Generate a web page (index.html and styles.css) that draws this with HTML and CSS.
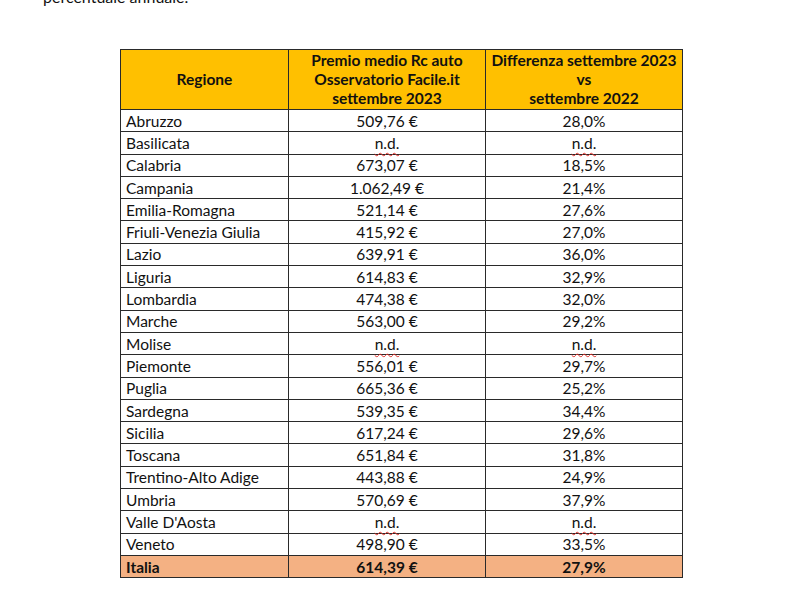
FILE: index.html
```html
<!DOCTYPE html>
<html lang="it">
<head>
<meta charset="utf-8">
<link rel="stylesheet" href="styles.css">
</head>
<body>
<p class="intro">percentuale annuale.</p>
<table class="rc">
  <colgroup>
    <col class="c1"><col class="c2"><col class="c3">
  </colgroup>
  <thead>
    <tr>
      <th>Regione</th>
      <th>Premio medio Rc auto<br>Osservatorio Facile.it<br>settembre 2023</th>
      <th>Differenza settembre 2023<br>vs<br>settembre 2022</th>
    </tr>
  </thead>
  <tbody>
    <tr><td>Abruzzo</td><td>509,76 €</td><td>28,0%</td></tr>
    <tr><td>Basilicata</td><td><span class="nd">n.d.</span></td><td><span class="nd">n.d.</span></td></tr>
    <tr><td>Calabria</td><td>673,07 €</td><td>18,5%</td></tr>
    <tr><td>Campania</td><td>1.062,49 €</td><td>21,4%</td></tr>
    <tr><td>Emilia-Romagna</td><td>521,14 €</td><td>27,6%</td></tr>
    <tr><td>Friuli-Venezia Giulia</td><td>415,92 €</td><td>27,0%</td></tr>
    <tr><td>Lazio</td><td>639,91 €</td><td>36,0%</td></tr>
    <tr><td>Liguria</td><td>614,83 €</td><td>32,9%</td></tr>
    <tr><td>Lombardia</td><td>474,38 €</td><td>32,0%</td></tr>
    <tr><td>Marche</td><td>563,00 €</td><td>29,2%</td></tr>
    <tr><td>Molise</td><td><span class="nd">n.d.</span></td><td><span class="nd">n.d.</span></td></tr>
    <tr><td>Piemonte</td><td>556,01 €</td><td>29,7%</td></tr>
    <tr><td>Puglia</td><td>665,36 €</td><td>25,2%</td></tr>
    <tr><td>Sardegna</td><td>539,35 €</td><td>34,4%</td></tr>
    <tr><td>Sicilia</td><td>617,24 €</td><td>29,6%</td></tr>
    <tr><td>Toscana</td><td>651,84 €</td><td>31,8%</td></tr>
    <tr><td>Trentino-Alto Adige</td><td>443,88 €</td><td>24,9%</td></tr>
    <tr><td>Umbria</td><td>570,69 €</td><td>37,9%</td></tr>
    <tr><td>Valle D'Aosta</td><td><span class="nd">n.d.</span></td><td><span class="nd">n.d.</span></td></tr>
    <tr><td>Veneto</td><td>498,90 €</td><td>33,5%</td></tr>
    <tr class="total"><td>Italia</td><td>614,39 €</td><td>27,9%</td></tr>
  </tbody>
</table>
</body>
</html>
```
FILE: styles.css
```css
html, body {
  margin: 0;
  padding: 0;
  background: #ffffff;
}
body {
  font-family: Lato, "Open Sans", sans-serif;
  color: #111;
}
.intro {
  margin: -13px 0 0 43px;
  font-size: 16px;
  line-height: 20px;
  height: 20px;
}
.rc {
  border-collapse: collapse;
  margin: 42px 0 0 120px;
  width: 562px;
  font-size: 15.5px;
  table-layout: fixed;
}
.c1 { width: 168px; }
.c2 { width: 197px; }
.c3 { width: 197px; }
.rc th, .rc td {
  border: 1.5px solid #2a2a2a;
  padding: 0;
}
.rc thead tr {
  height: 60px;
}
.rc th {
  background: #ffc000;
  font-weight: 700;
  line-height: 19px;
  text-align: center;
  vertical-align: middle;
}
.rc tbody tr {
  height: 22.3px;
}
.rc td {
  line-height: 20px;
  text-align: center;
}
.rc td:first-child {
  text-align: left;
  padding-left: 5px;
}
.nd {
  text-decoration: underline wavy #e0302a;
  text-decoration-thickness: 1px;
  text-underline-offset: 3px;
}
.total td {
  background: #f4b183;
  font-weight: 700;
}
```
